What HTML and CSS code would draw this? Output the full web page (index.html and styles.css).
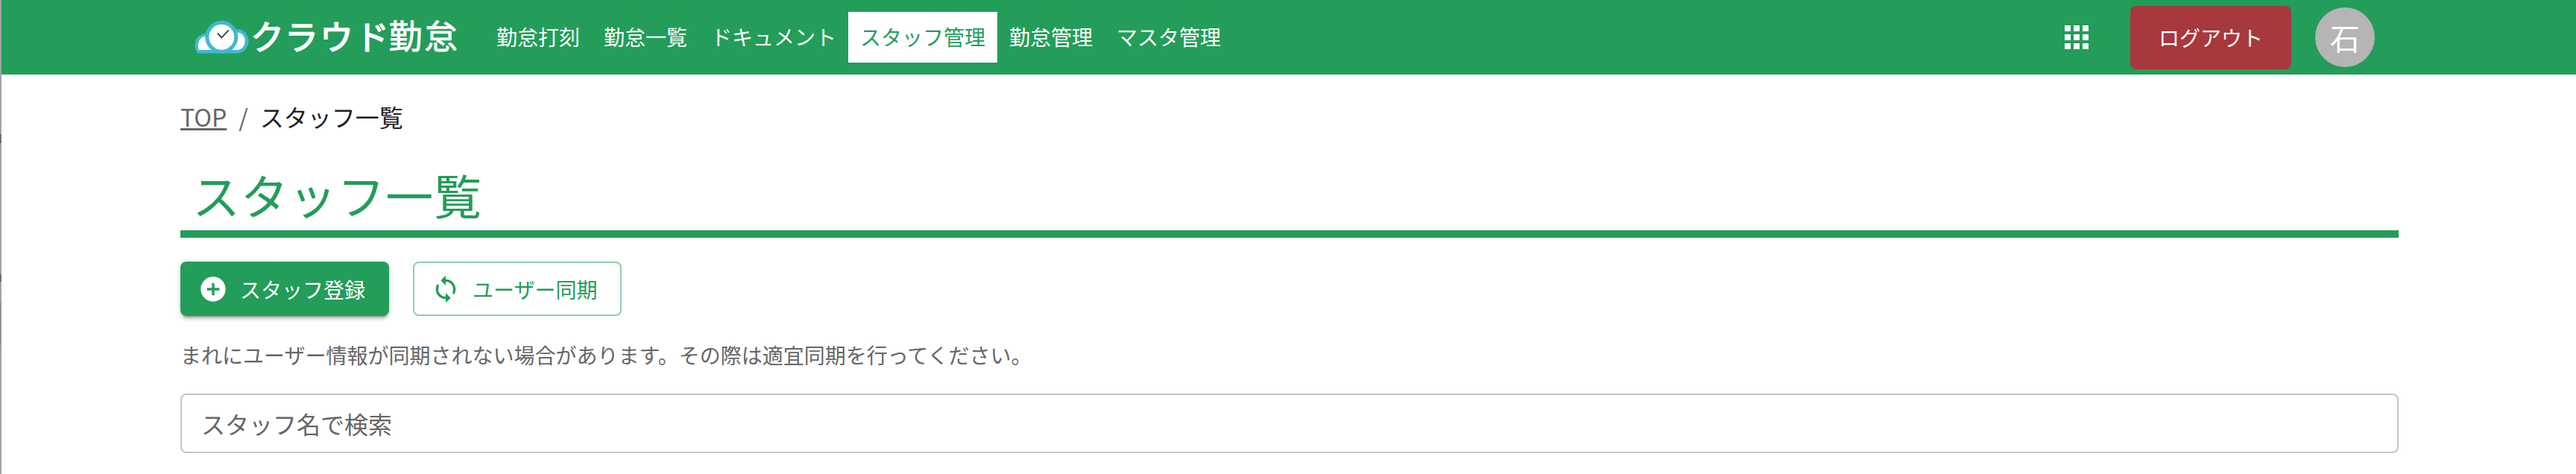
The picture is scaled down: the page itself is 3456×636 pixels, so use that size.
FILE: index.html
```html
<!DOCTYPE html>
<html lang="ja">
<head>
<meta charset="utf-8">
<title>スタッフ一覧</title>
<link rel="stylesheet" href="styles.css">
</head>
<body>
<div class="edge"><i class="edge-a"></i><i class="edge-b"></i><i class="edge-c"></i></div>
<div class="app">
<header class="header">
  <a class="logo" href="#">
    <svg width="360" height="80" viewBox="258 10 360 80" role="img">
      <path fill="#43b8d0" d="M265 71.500C258 61 262 46 276 44.500L318 39C328 39 333.500 47 333.500 55C333.500 65 326 71.500 318 71.500Z"/>
      <path fill="#fff" d="M266.500 67C264 57 268 50 275.500 48.500C275 56 279 63 285.500 67Z"/>
      <path fill="#fff" d="M310.500 67C317 61 320 53 318.500 43.500C325 44 328.700 49 328.700 55C328.700 62 324 67 318 67Z"/>
      <circle cx="297.300" cy="49.800" r="19.500" fill="#fff" stroke="#43b8d0" stroke-width="5"/>
      <path d="M292 44.700L297.300 50.500L306.700 40.500" fill="none" stroke="#26323f" stroke-width="1.800"/>
      <text class="logo-text" x="336 382 429 477" y="66.500">クラウド</text>
      <text class="logo-text logo-kanji" x="521.500 569" y="66">勤怠</text>
    </svg>
  </a>
  <nav class="nav">
    <a class="nav-item">勤怠打刻</a><a class="nav-item">勤怠一覧</a><a class="nav-item">ドキュメント</a><a class="nav-item active">スタッフ管理</a><a class="nav-item">勤怠管理</a><a class="nav-item">マスタ管理</a>
  </nav>
  <div class="tools">
    <svg class="apps" width="48" height="48" viewBox="0 0 24 24" fill="#fff"><path d="M4 8h4V4H4v4zm6 12h4v-4h-4v4zm-6 0h4v-4H4v4zm0-6h4v-4H4v4zm6 0h4v-4h-4v4zm6-10v4h4V4h-4zm-6 4h4V4h-4v4zm6 6h4v-4h-4v4zm0 6h4v-4h-4v4z"/></svg>
    <button class="logout">ログアウト</button>
    <div class="avatar">石</div>
  </div>
</header>
<main class="main">
  <div class="crumbs"><a class="crumb-link">TOP</a><span class="sep">/</span><span class="current">スタッフ一覧</span></div>
  <h1 class="title">スタッフ一覧</h1>
  <div class="actions">
    <button class="btn primary"><svg width="40" height="40" viewBox="0 0 24 24" fill="currentColor"><path d="M12 2C6.480 2 2 6.480 2 12s4.480 10 10 10 10-4.480 10-10S17.520 2 12 2zm5 11h-4v4h-2v-4H7v-2h4V7h2v4h4v2z"/></svg>スタッフ登録</button>
    <button class="btn outlined"><svg width="40" height="40" viewBox="0 0 24 24" fill="currentColor"><path d="M12 4V1L8 5l4 4V6c3.310 0 6 2.690 6 6 0 1.010-.250 1.970-.700 2.800l1.460 1.460C19.540 15.030 20 13.570 20 12c0-4.420-3.580-8-8-8zm0 14c-3.310 0-6-2.690-6-6 0-1.010.250-1.970.700-2.800L5.240 7.740C4.460 8.970 4 10.430 4 12c0 4.420 3.580 8 8 8v3l4-4-4-4v3z"/></svg>ユーザー同期</button>
  </div>
  <p class="note">まれにユーザー情報が同期されない場合があります。その際は適宜同期を行ってください。</p>
  <input class="search" type="text" placeholder="スタッフ名で検索">
</main>
</div>
</body>
</html>
```
FILE: styles.css
```css
* { box-sizing: border-box; }
body {
  margin: 0;
  display: flex;
  height: 636px;
  overflow: hidden;
  background: #fff;
  font-family: "Noto Sans CJK JP", sans-serif;
  color: #212121;
}
.edge { width: 2px; background: #a3a3a3; display: flex; flex-direction: column; }
.edge i { display: block; background: #707070; }
.edge-a { height: 12px; margin-top: 180px; }
.edge-b { height: 10px; margin-top: 176px; }
.edge .edge-c { height: 56px; margin-top: 28px; background: #939393; }
.app { flex: 1; }
.header {
  height: 100px;
  background: #239d59;
  display: flex;
  align-items: center;
  padding: 0 270px 0 256px;
}
.logo { display: flex; width: 392px; }
.logo-text {
  font-size: 45px;
  font-weight: 400;
  fill: #fff;
  stroke: #fff;
  stroke-width: 1.6px;
  stroke-linejoin: round;
}
.logo-kanji { stroke-width: 0.8px; }
.nav { display: flex; }
.nav-item {
  height: 68px;
  padding: 0 16px;
  font-size: 28px;
  line-height: 66px;
  color: #fff;
  white-space: nowrap;
}
.nav-item.active { background: #fff; color: #239d59; }
.tools { display: flex; align-items: center; margin-left: auto; }
button { font-family: inherit; font-size: 28px; white-space: nowrap; }
.logout {
  width: 216px;
  height: 85px;
  margin: 0 32px 0 48px;
  padding: 0;
  border: 0;
  border-radius: 8px;
  background: #a6383e;
  color: #fff;
}
.avatar {
  width: 80px;
  height: 80px;
  border-radius: 50%;
  background: #b5b5b5;
  color: #fff;
  font-size: 40px;
  line-height: 80px;
  text-align: center;
}
.main { padding: 32px 238px 0 240px; }
.crumbs {
  display: flex;
  gap: 16px;
  height: 48px;
  font-size: 32px;
  line-height: 48px;
  color: #666;
}
.crumb-link { text-decoration: underline; }
.current { color: #212121; }
.title {
  margin: 42px 0 0;
  height: 97px;
  padding-left: 16px;
  border-bottom: 10px solid #239d59;
  font-size: 64px;
  font-weight: 400;
  line-height: 76px;
  letter-spacing: 0.8px;
  color: #239d59;
}
.actions { display: flex; gap: 32px; margin-top: 32px; }
.btn {
  display: flex;
  align-items: center;
  gap: 16px;
  width: 280px;
  height: 73px;
  padding: 0 0 0 24px;
  border: 0;
  border-radius: 8px;
}
.primary {
  background: #239d59;
  color: #fff;
  box-shadow: 0 6px 2px -4px rgba(0,0,0,.2), 0 4px 4px rgba(0,0,0,.14), 0 2px 10px rgba(0,0,0,.12);
}
.outlined {
  padding-left: 22px;
  border: 2px solid #91ceac;
  background: transparent;
  color: #239d59;
}
.note {
  margin: 32px 0;
  font-size: 28px;
  line-height: 40px;
  color: #666;
}
.search {
  display: block;
  width: 100%;
  height: 80px;
  padding: 0 26px;
  border: 2px solid #c4c4c4;
  border-radius: 8px;
  background: #fff;
  font-family: inherit;
  font-size: 32px;
}
.search::placeholder { color: #666; opacity: 1; }
```
